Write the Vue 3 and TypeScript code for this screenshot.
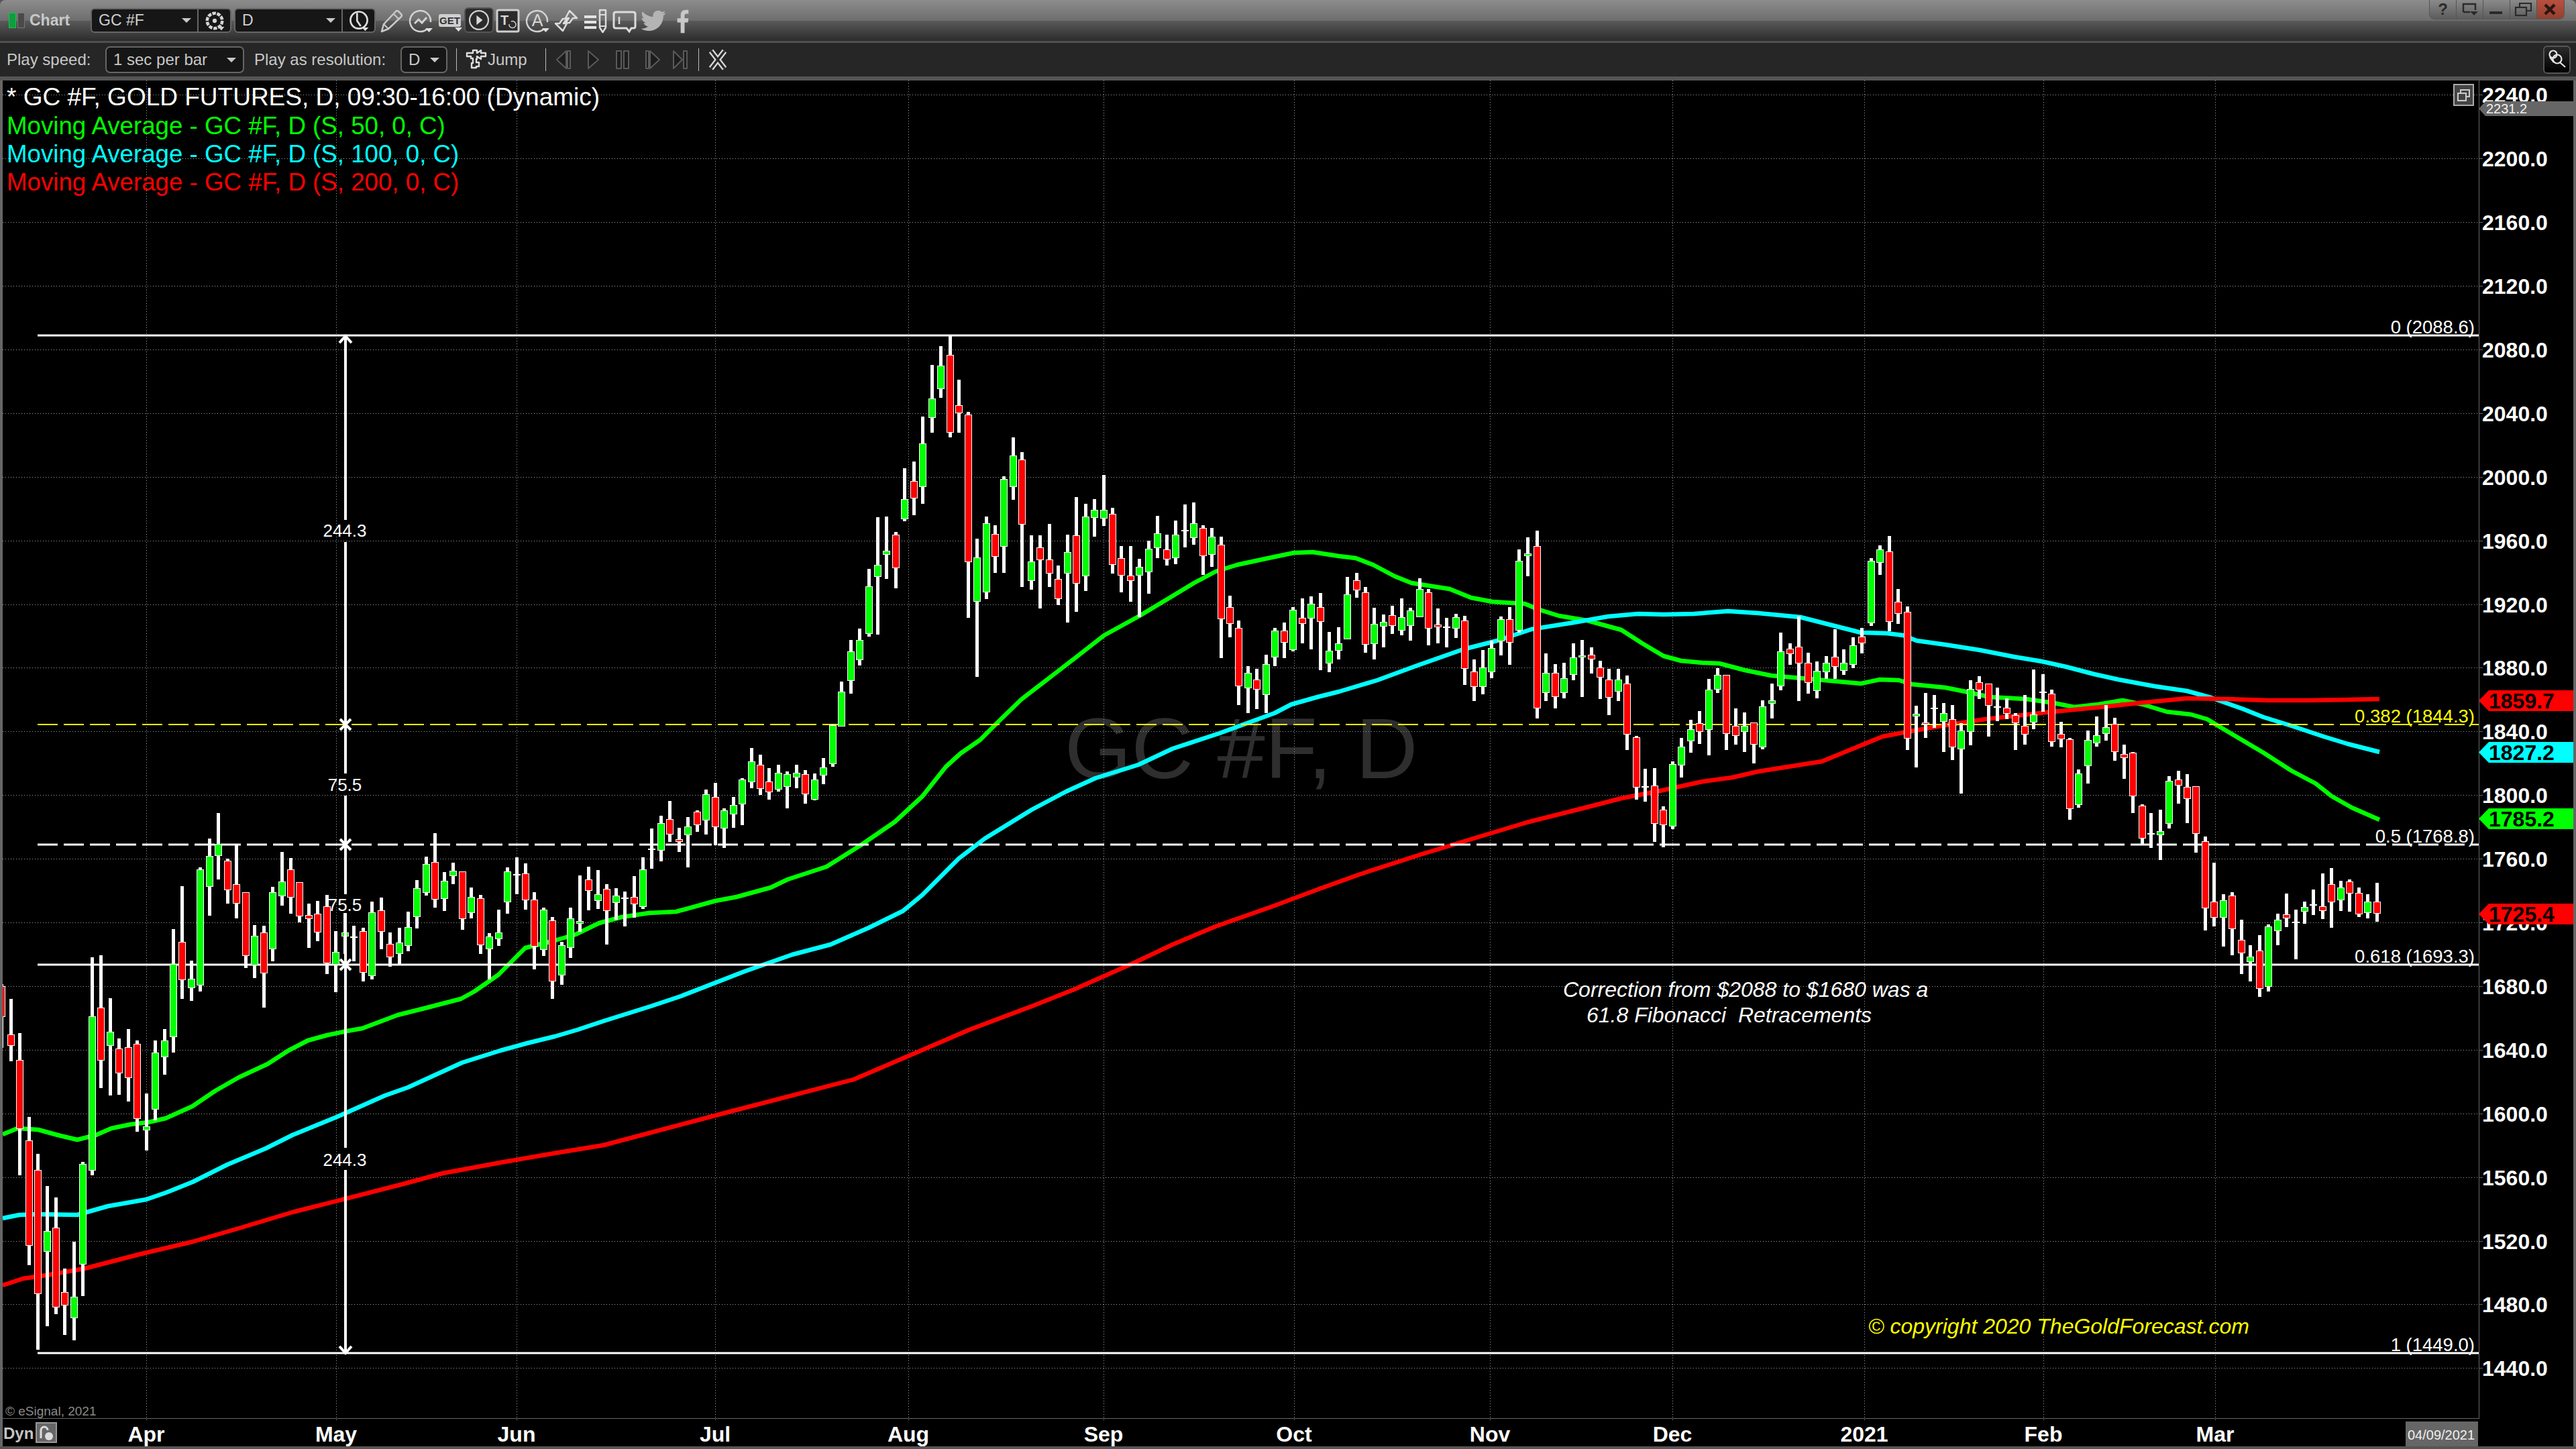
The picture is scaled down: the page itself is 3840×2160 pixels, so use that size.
<script setup lang="ts">
import { computed } from 'vue'

// [high, low, bodyTop, bodyBottom, up] in page pixels, one row per daily bar
const bars: number[][] = [
  [1467,1562,1471,1515,0],[1489,1582,1543,1558,0],[1540,1752,1581,1682,0],[1665,1886,1701,1856,0],[1720,2012,1745,1928,0],
  [1768,1977,1836,1865,1],[1785,1959,1831,1948,0],[1891,1990,1927,1945,0],[1851,1998,1934,1964,1],[1732,1932,1736,1884,1],
  [1427,1752,1516,1744,1],[1424,1622,1503,1580,0],[1488,1633,1539,1558,1],[1548,1632,1564,1599,0],[1534,1642,1562,1606,0],
  [1551,1687,1557,1667,0],[1630,1715,1680,1684,1],[1551,1670,1570,1653,1],[1534,1602,1552,1575,1],[1385,1569,1438,1545,1],
  [1321,1489,1405,1460,0],[1432,1492,1460,1472,1],[1293,1478,1297,1468,1],[1250,1365,1277,1321,1],[1212,1311,1259,1275,1],
  [1280,1347,1284,1326,0],[1259,1369,1319,1346,0],[1331,1443,1331,1424,0],[1379,1458,1396,1438,1],[1380,1502,1391,1450,0],
  [1322,1433,1331,1414,1],[1270,1350,1315,1335,1],[1279,1362,1297,1337,0],[1315,1375,1316,1365,0],[1347,1413,1365,1369,0],
  [1343,1403,1363,1389,0],[1334,1452,1352,1435,0],[1388,1479,1420,1437,1],[1361,1422,1391,1395,1],[1380,1433,1397,1397,1],
  [1383,1463,1389,1449,0],[1344,1460,1361,1454,1],[1338,1415,1358,1388,0],[1390,1441,1408,1426,0],[1383,1438,1406,1421,1],
  [1359,1418,1383,1409,1],[1312,1384,1325,1366,1],[1277,1335,1289,1330,1],[1242,1353,1286,1340,0],[1300,1358,1314,1339,1],
  [1286,1318,1299,1305,1],[1300,1386,1300,1369,0],[1323,1369,1338,1360,1],[1334,1422,1340,1408,0],[1391,1460,1397,1414,1],
  [1356,1410,1391,1399,1],[1293,1362,1300,1344,1],[1278,1333,1304,1304,1],[1287,1356,1303,1341,0],[1330,1445,1342,1410,0],
  [1353,1425,1357,1415,1],[1367,1489,1373,1462,0],[1404,1468,1410,1453,1],[1353,1428,1370,1412,1],[1305,1389,1374,1376,1],
  [1292,1357,1312,1327,0],[1297,1355,1334,1342,1],[1318,1408,1326,1357,0],[1324,1371,1336,1345,1],[1329,1381,1339,1339,1],
  [1306,1368,1338,1347,0],[1278,1355,1297,1351,1],[1235,1295,1266,1266,1],[1216,1284,1228,1267,1],[1194,1255,1222,1243,0],
  [1234,1270,1252,1254,0],[1218,1293,1233,1244,1],[1208,1240,1211,1229,0],[1177,1244,1185,1222,1],[1167,1260,1189,1232,0],
  [1205,1264,1209,1234,1],[1188,1234,1201,1213,1],[1160,1230,1163,1198,1],[1115,1175,1136,1165,1],[1125,1185,1141,1175,0],
  [1145,1192,1166,1180,0],[1140,1180,1153,1176,1],[1150,1205,1155,1172,1],[1140,1175,1153,1158,1],[1148,1198,1155,1183,0],
  [1153,1193,1163,1191,1],[1130,1169,1145,1155,1],[1080,1143,1082,1138,1],[1016,1083,1032,1082,1],[954,1034,972,1014,1],
  [937,992,955,983,1],[848,949,875,944,1],[771,946,843,859,1],[770,863,822,826,1],[793,877,798,846,0],
  [698,777,745,773,1],[688,768,718,742,0],[621,751,662,725,1],[544,645,595,622,1],[516,593,546,579,1],
  [500,652,530,644,0],[566,645,605,615,0],[614,921,619,837,0],[803,1009,832,896,1],[770,893,781,882,1],
  [783,854,797,829,0],[710,854,715,814,1],[652,745,680,725,1],[674,875,686,781,0],[798,879,838,865,1],
  [798,907,817,834,0],[781,875,835,854,0],[843,902,864,892,0],[797,928,824,854,1],[741,912,799,869,0],
  [751,881,771,858,1],[744,800,761,771,1],[708,784,761,772,1],[757,855,767,841,0],[814,883,833,857,0],
  [814,897,859,865,0],[833,920,846,857,1],[806,885,819,852,1],[769,832,796,816,1],[797,843,820,833,0],
  [776,841,798,831,1],[752,816,791,791,1],[749,812,781,801,1],[783,857,788,828,0],[787,845,801,826,1],
  [800,981,813,922,0],[888,950,906,929,0],[925,1051,937,1022,0],[993,1063,1004,1025,1],[997,1057,1014,1027,0],
  [976,1063,991,1035,1],[936,993,941,979,1],[928,981,941,957,0],[905,971,910,968,1],[892,959,922,929,0],
  [889,968,901,921,1],[884,999,906,926,0],[942,1002,971,988,1],[935,983,960,969,1],[860,952,887,952,1],
  [854,891,866,879,0],[875,973,884,960,0],[906,983,931,959,1],[916,965,928,933,1],[903,945,918,932,0],
  [892,947,921,939,1],[906,955,911,932,1],[862,918,879,919,1],[878,962,884,936,0],[907,959,932,934,0],
  [921,965,935,935,1],[915,951,921,936,1],[918,1021,926,996,0],[983,1045,1002,1023,0],[969,1035,996,1023,1],
  [955,1011,967,1001,1],[919,977,924,955,1],[905,991,924,957,0],[819,943,837,939,1],[801,859,826,828,1],
  [791,1071,815,1055,0],[974,1045,1004,1032,1],[990,1056,1004,1038,0],[988,1041,1012,1032,1],[959,1014,981,1005,1],
  [954,1039,978,979,1],[965,1004,977,982,0],[985,1042,996,1009,0],[997,1066,1014,1039,0],[997,1045,1014,1030,1],
  [1007,1118,1020,1094,0],[1097,1192,1100,1173,0],[1146,1195,1173,1173,1],[1145,1255,1172,1227,0],[1202,1263,1208,1229,0],
  [1135,1236,1140,1231,1],[1100,1159,1114,1140,1],[1073,1122,1088,1104,1],[1060,1109,1079,1090,0],[1012,1126,1029,1087,1],
  [996,1033,1007,1027,1],[1006,1118,1007,1093,0],[1056,1110,1083,1096,0],[1062,1121,1083,1090,1],[1078,1138,1078,1109,0],
  [1044,1117,1054,1113,1],[1019,1071,1045,1048,1],[943,1029,972,1022,1],[959,991,968,974,0],[919,1045,965,988,0],
  [973,1034,989,1017,0],[986,1041,1001,1029,1],[978,1012,989,1001,1],[938,1012,980,993,0],[968,1006,989,999,1],
  [950,996,963,990,1],[936,974,950,958,0],[832,933,837,928,1],[813,857,820,838,1],[799,941,823,926,0],
  [878,930,898,914,0],[904,1118,913,1100,0],[1052,1144,1065,1067,1],[1033,1100,1078,1079,0],[1036,1085,1056,1056,1],
  [1048,1121,1064,1075,1],[1051,1133,1073,1113,0],[1078,1183,1090,1116,1],[1014,1111,1028,1090,1],[1008,1042,1018,1028,0],
  [1019,1098,1020,1051,0],[1025,1075,1054,1054,1],[1041,1072,1056,1063,0],[1063,1118,1067,1077,0],[1036,1110,1083,1094,0],
  [998,1087,1066,1076,1],[1005,1061,1032,1032,1],[1028,1113,1035,1105,0],[1076,1114,1095,1101,0],[1100,1222,1103,1205,0],
  [1147,1204,1154,1199,1],[1089,1168,1104,1141,1],[1068,1113,1097,1107,1],[1051,1104,1085,1093,1],[1070,1134,1080,1120,0],
  [1110,1161,1125,1129,0],[1121,1212,1123,1186,0],[1199,1259,1202,1249,0],[1212,1264,1243,1243,1],[1207,1282,1240,1244,1],
  [1157,1235,1165,1227,1],[1149,1198,1163,1170,0],[1154,1227,1174,1190,0],[1173,1271,1173,1242,0],[1247,1387,1255,1353,0],
  [1286,1381,1345,1367,0],[1333,1411,1343,1367,1],[1330,1424,1336,1384,0],[1371,1452,1402,1420,0],[1409,1463,1427,1433,1],
  [1394,1486,1418,1473,0],[1378,1478,1382,1470,1],[1362,1409,1372,1387,1],[1332,1382,1364,1368,0],[1356,1430,1375,1375,1],
  [1344,1377,1353,1358,1],[1326,1364,1349,1349,1],[1302,1370,1352,1357,0],[1294,1383,1319,1344,0],[1313,1358,1324,1341,1],
  [1311,1359,1315,1331,0],[1323,1367,1332,1362,0],[1333,1369,1345,1360,1],[1316,1374,1345,1361,0],
]

const candles = computed(() => bars.map((b, i) => {
  const x = Math.round(2.7 + 13.462 * i - 2.5)
  return { key: i, x, high: b[0], wick: b[1] - b[0], top: b[2], body: b[3] - b[2], up: b[4] === 1, doji: b[2] === b[3] }
}))

const ma50 = '4,1691 26,1682 57,1684 86,1692 115,1699 143,1692 166,1682 195,1676 221,1673 247,1667 287,1649 321,1626 356,1606 399,1586 430,1566 459,1551 488,1543 517,1537 540,1533 593,1513 633,1503 687,1489 707,1478 743,1453 783,1413 827,1402 858,1393 893,1376 927,1367 967,1361 1008,1359 1066,1343 1098,1337 1149,1323 1174,1311 1232,1292 1283,1260 1334,1225 1375,1187 1410,1143 1432,1123 1461,1103 1487,1077 1522,1043 1570,1006 1605,979 1646,947 1697,919 1742,892 1780,869 1812,852 1844,842 1900,830 1929,824 1957,823 1996,829 2021,832 2047,842 2079,859 2104,869 2161,878 2193,891 2225,897 2273,900 2295,909 2324,918 2366,925 2417,939 2448,959 2480,978 2506,985 2538,988 2563,989 2601,999 2640,1007 2697,1012 2774,1019 2802,1013 2831,1014 2850,1020 2900,1025 2930,1031 2966,1039 3020,1042 3062,1048 3092,1054 3128,1050 3164,1044 3194,1050 3230,1061 3266,1065 3290,1072 3320,1090 3374,1122 3416,1149 3452,1168 3476,1187 3506,1204 3547,1222'
const ma100 = '4,1816 29,1811 57,1810 115,1811 161,1798 218,1788 247,1778 287,1762 339,1736 396,1712 436,1692 502,1665 574,1633 608,1621 689,1584 746,1566 786,1555 827,1545 861,1535 900,1522 970,1500 1015,1485 1110,1448 1181,1423 1238,1408 1295,1383 1346,1358 1375,1334 1429,1280 1468,1250 1538,1207 1589,1180 1633,1160 1697,1140 1748,1116 1818,1093 1900,1063 1925,1050 1964,1039 1996,1031 2053,1014 2110,993 2181,968 2232,955 2283,938 2346,928 2397,919 2442,915 2480,916 2525,915 2576,911 2621,914 2684,920 2723,930 2774,943 2812,944 2837,947 2857,955 2900,961 2951,969 3002,979 3044,986 3080,994 3122,1005 3158,1013 3212,1023 3260,1030 3296,1040 3344,1057 3374,1069 3416,1082 3464,1098 3500,1109 3547,1121'
const ma200 = '4,1916 34,1906 69,1901 126,1891 207,1870 287,1851 356,1831 436,1807 511,1788 597,1766 660,1749 746,1733 815,1721 900,1707 1077,1660 1273,1609 1445,1535 1538,1500 1601,1475 1691,1435 1748,1408 1812,1381 1900,1350 1964,1326 2028,1303 2117,1274 2206,1247 2276,1226 2359,1205 2417,1190 2474,1179 2538,1165 2582,1159 2621,1150 2716,1135 2755,1119 2806,1098 2837,1092 2900,1081 2960,1072 3050,1062 3122,1055 3188,1048 3260,1041 3320,1042 3380,1044 3440,1044 3500,1043 3547,1042'

const priceY = (p: number) => Math.round(141.3 + (2240 - p) * 2.3725)
const priceTicks = Array.from({ length: 21 }, (_, i) => {
  const p = 2240 - i * 40
  return { label: p.toFixed(1), y: priceY(p) }
})

const months = [
  { label: 'Apr', x: 218 }, { label: 'May', x: 501 }, { label: 'Jun', x: 770 }, { label: 'Jul', x: 1066 },
  { label: 'Aug', x: 1354 }, { label: 'Sep', x: 1645 }, { label: 'Oct', x: 1929 }, { label: 'Nov', x: 2221 },
  { label: 'Dec', x: 2493 }, { label: '2021', x: 2779 }, { label: 'Feb', x: 3046 }, { label: 'Mar', x: 3302 },
]

const fibs = [
  { y: 500, label: '0 (2088.6)', color: '#ffffff', dash: '', width: 3 },
  { y: 1080, label: '0.382 (1844.3)', color: '#ffff00', dash: '30 9', width: 2 },
  { y: 1259, label: '0.5 (1768.8)', color: '#ffffff', dash: '30 9', width: 3 },
  { y: 1438, label: '0.618 (1693.3)', color: '#ffffff', dash: '', width: 3 },
  { y: 2017, label: '1 (1449.0)', color: '#ffffff', dash: '', width: 3 },
]

const legend = [
  { text: '* GC #F, GOLD FUTURES, D, 09:30-16:00 (Dynamic)', y: 157, color: '#ffffff', kind: 'legend' },
  { text: 'Moving Average - GC #F, D (S, 50, 0, C)', y: 200, color: '#00ff00', kind: 'legend legend--ma' },
  { text: 'Moving Average - GC #F, D (S, 100, 0, C)', y: 242, color: '#00ffff', kind: 'legend legend--ma' },
  { text: 'Moving Average - GC #F, D (S, 200, 0, C)', y: 284, color: '#ff0000', kind: 'legend legend--ma' },
]

const tags = [
  { label: '1859.7', top: 1029, fill: '#ff0000', ink: '#ffffff' },
  { label: '1827.2', top: 1106, fill: '#00ffff', ink: '#000000' },
  { label: '1785.2', top: 1205, fill: '#00ff00', ink: '#000000' },
  { label: '1725.4', top: 1347, fill: '#ff0000', ink: '#ffffff' },
]

const measureSegments = [[500, 775], [808, 1153], [1186, 1333], [1361, 1711], [1744, 2017]]
const measureMarks = [1080, 1259, 1438]
const measureLabels = [
  { text: '244.3', y: 800 }, { text: '75.5', y: 1179 }, { text: '75.5', y: 1358 }, { text: '244.3', y: 1738 },
]

const notes = [
  { text: 'Correction from $2088 to $1680 was a', x: 2330, y: 1486, color: '#ffffff' },
  { text: '61.8 Fibonacci  Retracements', x: 2365, y: 1524, color: '#ffffff' },
  { text: '© copyright 2020 TheGoldForecast.com', x: 2785, y: 1988, color: '#ffff00' },
]
</script>

<template>
  <div class="window">
    <header class="titlebar">
      <div class="brand">
        <span class="brand-on"></span>
        <span class="brand-off"></span>
        <span class="brand-name">Chart</span>
      </div>

      <div class="combo combo--symbol">
        <span class="combo-text">GC #F</span>
        <i class="caret"></i>
        <span class="combo-btn">
          <svg viewBox="0 0 40 40" width="40" height="40">
            <circle cx="20" cy="20" r="12.5" fill="none" stroke="#d4d4d4" stroke-width="5" stroke-dasharray="6 1.8" />
            <circle cx="20" cy="20" r="3.5" fill="#d4d4d4" />
            <path d="M26 30h10l-5 6z" fill="#d4d4d4" />
          </svg>
        </span>
      </div>
      <div class="combo combo--interval">
        <span class="combo-text">D</span>
        <i class="caret"></i>
        <span class="combo-btn">
          <svg viewBox="0 0 40 40" width="40" height="40">
            <circle cx="20" cy="19" r="14" fill="none" stroke="#dcdcdc" stroke-width="3" />
            <path d="M17 7v13l6 9" fill="none" stroke="#dcdcdc" stroke-width="3" />
            <path d="M25 31h11l-5.500 6z" fill="#dcdcdc" />
          </svg>
        </span>
      </div>

      <div class="tools">
        <span class="tool">
          <svg viewBox="0 0 40 40" width="40" height="40">
            <path d="M5 36l3-11L26 6q2-2 4 0l4 4q2 2 0 4L15 32z" fill="none" stroke="#c9c9c9" stroke-width="2.500" stroke-linejoin="round" />
            <path d="M23 10l7 7M8 25l7 7" fill="none" stroke="#c9c9c9" stroke-width="2" />
          </svg>
        </span>
        <span class="tool">
          <svg viewBox="0 0 40 40" width="40" height="40">
            <path d="M30 32A15.500 15.500 0 1 1 35 22" fill="none" stroke="#d2d2d2" stroke-width="2.500" />
            <path d="M11 24l6-6 5 5 7-8" fill="none" stroke="#d2d2d2" stroke-width="3" />
            <path d="M27 31h11l-5.500 6z" fill="#e0e0e0" />
          </svg>
        </span>
        <span class="tool">
          <svg viewBox="0 0 40 40" width="40" height="40">
            <rect x="4" y="10" width="33" height="19" rx="3" fill="#cfcfcf" />
            <text x="20.500" y="25" class="get-text">GET</text>
            <path d="M28 30h11l-5.500 6z" fill="#e0e0e0" />
          </svg>
        </span>
        <span class="tool tool--active">
          <svg viewBox="0 0 40 40" width="40" height="40">
            <circle cx="20" cy="20" r="15.500" fill="none" stroke="#cfcfcf" stroke-width="2.500" />
            <path d="M16 12l10 8-10 8z" fill="#d8d8d8" />
          </svg>
        </span>
        <span class="tool">
          <svg viewBox="0 0 40 40" width="40" height="40">
            <rect x="4" y="4" width="32" height="32" rx="2" fill="#2b2b2b" stroke="#cfcfcf" stroke-width="3" />
            <text x="15" y="26" class="t-text">T</text>
            <path d="M22 25a5 5 0 1 0 3-4" fill="none" stroke="#cfcfcf" stroke-width="1.500" />
          </svg>
        </span>
        <span class="tool">
          <svg viewBox="0 0 40 40" width="40" height="40">
            <path d="M30 32A15.500 15.500 0 1 1 35 22" fill="none" stroke="#d2d2d2" stroke-width="2.500" />
            <text x="20" y="28" class="a-text">A</text>
            <path d="M27 31h11l-5.500 6z" fill="#e0e0e0" />
          </svg>
        </span>
        <span class="tool">
          <svg viewBox="0 0 40 40" width="40" height="40">
            <path d="M25 5l11 11h-6l-5 7h-6l5-7h-5z" fill="none" stroke="#dcdcdc" stroke-width="2.500" stroke-linejoin="round" />
            <path d="M15 35L4 24h6l5-7h6l-5 7h5z" fill="none" stroke="#dcdcdc" stroke-width="2.500" stroke-linejoin="round" />
          </svg>
        </span>
        <span class="tool">
          <svg viewBox="0 0 40 40" width="40" height="40">
            <path d="M4 12h18v4H4zM4 20h18v4H4zM4 28h18v4H4z" fill="#e4e4e4" />
            <path d="M27 4h9v26l-4.500 7-4.500-7z" fill="none" stroke="#dcdcdc" stroke-width="2.500" stroke-linejoin="round" />
            <path d="M27 11h9M27 28h9" stroke="#dcdcdc" stroke-width="2" />
          </svg>
        </span>
        <span class="tool">
          <svg viewBox="0 0 40 40" width="40" height="40">
            <path d="M7 7h26q3 0 3 3v18q0 3-3 3h-3l-3 5-4-5H7q-3 0-3-3V10q0-3 3-3z" fill="none" stroke="#dcdcdc" stroke-width="3" />
            <path d="M12 14v11" stroke="#dcdcdc" stroke-width="2.500" />
          </svg>
        </span>
        <span class="tool">
          <svg viewBox="0 0 24 24" width="40" height="40">
            <path d="M23 4.900c-.8.4-1.700.6-2.600.7 1-.6 1.700-1.400 2-2.500-.9.5-1.900.9-2.900 1.100C18.700 3.300 17.500 2.800 16.200 2.800c-2.500 0-4.600 2-4.600 4.600 0 .4 0 .7.100 1C7.900 8.200 4.500 6.400 2.300 3.600c-.4.700-.6 1.400-.6 2.300 0 1.600.8 3 2 3.800-.8 0-1.500-.2-2.100-.6v.1c0 2.200 1.600 4.100 3.700 4.500-.4.100-.8.200-1.200.2-.3 0-.6 0-.9-.1.600 1.800 2.300 3.200 4.300 3.200-1.600 1.200-3.600 2-5.700 2-.4 0-.7 0-1.100-.1 2 1.300 4.500 2.100 7.100 2.100 8.500 0 13.100-7 13.100-13.100v-.6c.9-.6 1.700-1.500 2.300-2.400z" fill="#b4b4b4" />
          </svg>
        </span>
        <span class="tool">
          <svg viewBox="0 0 24 24" width="40" height="40">
            <path d="M13.500 23v-9.500h3l.5-3.700h-3.500V7.400c0-1 .3-1.700 1.700-1.700H17V2.300c-.3 0-1.400-.1-2.600-.1-2.600 0-4.400 1.600-4.400 4.500v3.100H7v3.700h3V23z" fill="#c8c8c8" />
          </svg>
        </span>
      </div>

      <div class="winbtns">
        <span class="winbtn"><span class="help">?</span></span>
        <span class="winbtn">
          <svg viewBox="0 0 30 24" width="30" height="24">
            <path d="M5 16V4h18v9M5 16h10" fill="none" stroke="#2a2a2a" stroke-width="2.500" />
            <path d="M15 15h12l-6 6z" fill="#2a2a2a" />
          </svg>
        </span>
        <span class="winbtn">
          <svg viewBox="0 0 30 24" width="30" height="24"><rect x="4" y="15" width="19" height="4" fill="#2a2a2a" /></svg>
        </span>
        <span class="winbtn">
          <svg viewBox="0 0 30 24" width="30" height="24">
            <rect x="3" y="9" width="16" height="12" fill="none" stroke="#2a2a2a" stroke-width="2.200" />
            <path d="M9 8V3h17v11h-6" fill="none" stroke="#2a2a2a" stroke-width="2.200" />
          </svg>
        </span>
        <span class="winbtn winbtn--close">
          <svg viewBox="0 0 30 24" width="30" height="24">
            <path d="M7 5l14 14M21 5L7 19" stroke="#2c1511" stroke-width="4.500" />
          </svg>
        </span>
      </div>
    </header>

    <div class="playbar">
      <span class="play-label play-label--speed">Play speed:</span>
      <div class="select select--speed">
        <span>1 sec per bar</span>
        <i class="caret"></i>
      </div>
      <span class="play-label play-label--res">Play as resolution:</span>
      <div class="select select--res">
        <span>D</span>
        <i class="caret"></i>
      </div>
      <i class="vsep vsep--a"></i>
      <div class="jump">
        <svg viewBox="0 0 32 32" width="32" height="32">
          <path d="M2 6h9V2h6v4l6-4v4h7v5h-7v4l-6-4v4h-1v5h4v6h-4v2H9v-7h2v-7H8V11H2z" fill="#262626" stroke="#dedede" stroke-width="2.400" stroke-linejoin="round" />
        </svg>
        <span>Jump</span>
      </div>
      <i class="vsep vsep--b"></i>
      <svg class="pb pb--prev" viewBox="0 0 24 30" width="24" height="30">
        <path d="M16 2L2 15l14 13zM18 2h4v26h-4z" fill="#1d1d1d" stroke="#5a5a5a" stroke-width="2" stroke-linejoin="round" />
      </svg>
      <svg class="pb pb--play" viewBox="0 0 20 30" width="20" height="30">
        <path d="M2 2l15 13L2 28z" fill="#1d1d1d" stroke="#5a5a5a" stroke-width="2" stroke-linejoin="round" />
      </svg>
      <svg class="pb pb--pause" viewBox="0 0 22 30" width="22" height="30">
        <path d="M2 2h7v26H2zM13 2h7v26h-7z" fill="#1d1d1d" stroke="#5a5a5a" stroke-width="2" stroke-linejoin="round" />
      </svg>
      <svg class="pb pb--next" viewBox="0 0 24 30" width="24" height="30">
        <path d="M2 2h4v26H2zM8 2l14 13L8 28z" fill="#1d1d1d" stroke="#5a5a5a" stroke-width="2" stroke-linejoin="round" />
      </svg>
      <svg class="pb pb--end" viewBox="0 0 24 30" width="24" height="30">
        <path d="M2 2l13 13L2 28zM17 2h5v26h-5z" fill="#1d1d1d" stroke="#5a5a5a" stroke-width="2" stroke-linejoin="round" />
      </svg>
      <i class="vsep vsep--c"></i>
      <svg class="xbtn" viewBox="0 0 32 32" width="32" height="32">
        <path d="M6 3l20 26M26 3L6 29" stroke="#d8d8d8" stroke-width="8" />
        <path d="M6 3l20 26M26 3L6 29" stroke="#2a2a2a" stroke-width="3.500" />
      </svg>
      <div class="pin-btn">
        <svg viewBox="0 0 32 32" width="32" height="32">
          <circle cx="10" cy="8" r="5.500" fill="none" stroke="#e6e6e6" stroke-width="2.200" />
          <circle cx="16" cy="15" r="6.500" fill="none" stroke="#e6e6e6" stroke-width="2.200" />
          <path d="M20 20l8 7M5 12l6 8" stroke="#e6e6e6" stroke-width="2.200" fill="none" />
        </svg>
      </div>
    </div>

    <svg class="chart" viewBox="0 120 3840 2040" width="3840" height="2040">
      <rect x="0" y="120" width="3840" height="2040" fill="#000" />

      <text x="1587" y="1160" class="watermark">GC #F, D</text>

      <g class="grid">
        <line v-for="t in priceTicks" :key="t.y" x1="4" :y1="t.y + 0.5" x2="3695" :y2="t.y + 0.5" />
        <line v-for="m in months" :key="m.label" :x1="m.x + 0.5" y1="120" :x2="m.x + 0.5" y2="2120" />
      </g>

      <line x1="3695.5" y1="120" x2="3695.5" y2="2115" class="axis" />
      <line x1="4" y1="2114.5" x2="3695" y2="2114.5" class="axis" />
      <line v-for="t in priceTicks" :key="'tick' + t.y" x1="3695" :y1="t.y + 0.5" x2="3701" :y2="t.y + 0.5" class="axis" />

      <polyline :points="ma50" class="ma" stroke="#00ff00" />
      <polyline :points="ma100" class="ma" stroke="#00ffff" />
      <polyline :points="ma200" class="ma" stroke="#ff0000" />

      <g v-for="f in fibs" :key="f.y">
        <line x1="56" :y1="f.y" x2="3695" :y2="f.y" :stroke="f.color" :stroke-width="f.width" :stroke-dasharray="f.dash" />
        <text x="3689" :y="f.y - 3" :fill="f.color" class="fib-label">{{ f.label }}</text>
      </g>

      <g v-for="c in candles" :key="c.key" class="candle">
        <rect :x="c.x" :y="c.high" width="5" :height="c.wick" fill="#fff" />
        <rect v-if="c.doji" :x="c.x - 3" :y="c.top - 1" width="11" height="2" fill="#fff" />
        <template v-else>
          <rect :x="c.x - 3" :y="c.top - 1" width="11" :height="c.body + 2" fill="#fff" />
          <rect :x="c.x - 2" :y="c.top" width="9" :height="c.body" :fill="c.up ? '#00ff00' : '#ff0000'" />
        </template>
      </g>

      <g class="measure">
        <line v-for="s in measureSegments" :key="s[0]" x1="515" :y1="s[0]" x2="515" :y2="s[1]" />
        <path d="M506 511l9-10 9 10M506 2007l9 10 9-10" fill="none" />
        <path v-for="y in measureMarks" :key="y" :d="`M507 ${y - 8}l16 16M523 ${y - 8}l-16 16`" />
        <text v-for="l in measureLabels" :key="l.y" x="514" :y="l.y" class="measure-label">{{ l.text }}</text>
      </g>

      <text v-for="l in legend" :key="l.y" x="10" :y="l.y" :fill="l.color" :class="l.kind">{{ l.text }}</text>
      <text v-for="n in notes" :key="n.text" :x="n.x" :y="n.y" :fill="n.color" class="note">{{ n.text }}</text>

      <text x="8" y="2110" class="vendor">© eSignal, 2021</text>

      <g transform="translate(3657 125)">
        <rect x="1" y="1" width="29" height="31" fill="#444" stroke="#aaa" stroke-width="2" />
        <rect x="7" y="14" width="12" height="11" fill="none" stroke="#ccc" stroke-width="2" />
        <path d="M11 13V9h13v10h-4" fill="none" stroke="#ccc" stroke-width="2" />
      </g>

      <text v-for="t in priceTicks" :key="'p' + t.y" x="3700" :y="t.y + 12" class="price">{{ t.label }}</text>

      <g>
        <path d="M3705 151h131v22h-131l-10-11z" fill="#666" />
        <text x="3706" y="169" class="mini">2231.2</text>
      </g>
      <g v-for="t in tags" :key="t.label">
        <path :d="`M3710 ${t.top}h126v31h-126l-15-15.500z`" :fill="t.fill" />
        <text x="3710" :y="t.top + 27" :fill="t.ink" class="price price--tag">{{ t.label }}</text>
      </g>

      <text v-for="m in months" :key="'m' + m.label" :x="m.x" y="2149" class="month">{{ m.label }}</text>

      <text x="5" y="2145" class="dyn">Dyn</text>
      <g transform="translate(53 2120)">
        <rect x="1" y="1" width="30" height="29" fill="#666" stroke="#999" stroke-width="2" />
        <path d="M8 24V12a5 5 0 0 1 10 0" fill="none" stroke="#ddd" stroke-width="3" />
        <circle cx="20" cy="21" r="6" fill="#ddd" />
      </g>

      <rect x="3586" y="2119" width="108" height="37" fill="#666" />
      <text x="3589" y="2146" class="mini">04/09/2021</text>

      <rect x="0" y="120" width="4" height="2040" fill="#666" />
      <rect x="3836" y="120" width="4" height="2040" fill="#666" />
      <rect x="0" y="2156" width="3840" height="4" fill="#555" />
    </svg>
  </div>
</template>

<style scoped>
.window {
  width: 3840px;
  height: 2160px;
  display: flex;
  flex-direction: column;
  overflow: hidden;
  background: #555;
  font-family: "Liberation Sans", Arial, sans-serif;
}

.titlebar {
  height: 61px;
  flex: none;
  display: flex;
  align-items: center;
  padding-left: 13px;
  border-radius: 8px 8px 0 0;
  border-bottom: 3px solid #505050;
  background: linear-gradient(#8c8c8c 0, #6e6e6e 50%, #5a5a5a 50%, #2c2c2c 100%);
}

.brand {
  width: 122px;
  display: flex;
  align-items: center;
  flex: none;
}

.brand-on,
.brand-off {
  width: 9px;
  height: 21px;
  border: 1px solid #5a5a5a;
}

.brand-on {
  background: #0f9d3f;
  border-color: #19c04f;
}

.brand-off {
  margin-left: 2px;
  background: #4a4a4a;
  border-color: #777;
}

.brand-name {
  margin-left: 7px;
  font-size: 23px;
  font-weight: 700;
  color: #c8c8c8;
}

.combo {
  height: 37px;
  flex: none;
  display: flex;
  align-items: center;
  box-sizing: border-box;
  border: 2px solid #666;
  border-radius: 6px;
  background: #161616;
  color: #cfcfcf;
  font-size: 23px;
}

.combo--symbol {
  width: 210px;
}

.combo--interval {
  width: 211px;
  margin-left: 4px;
}

.combo-text {
  margin-left: 10px;
  flex: 1;
}

.combo-btn {
  width: 47px;
  height: 100%;
  flex: none;
  margin-left: 9px;
  display: flex;
  align-items: center;
  justify-content: center;
  border-left: 2px solid #666;
}

.combo-btn svg {
  width: 36px;
  height: 36px;
}

.caret {
  flex: none;
  width: 0;
  height: 0;
  border-left: 7px solid transparent;
  border-right: 7px solid transparent;
  border-top: 7px solid #c8c8c8;
}

.tools {
  display: flex;
  flex: none;
  margin-left: 2px;
}

.tool {
  width: 43.4px;
  height: 40px;
  flex: none;
  display: flex;
  align-items: center;
  justify-content: center;
}

.tool--active {
  height: 38px;
  box-sizing: border-box;
  border: 2px solid #555;
  border-radius: 6px;
  background: #2b2b2b;
}

.tool--active svg {
  width: 36px;
  height: 36px;
}

.get-text {
  font: 700 15px "Liberation Sans", sans-serif;
  fill: #333;
  text-anchor: middle;
}

.t-text {
  font: 700 20px "Liberation Sans", sans-serif;
  fill: #d8d8d8;
  text-anchor: middle;
}

.a-text {
  font: 400 25px "Liberation Sans", sans-serif;
  fill: #d8d8d8;
  text-anchor: middle;
}

.winbtns {
  margin-left: auto;
  margin-right: 17px;
  align-self: flex-start;
  height: 28px;
  display: flex;
  border: 1px solid #555;
  border-top: 0;
  border-radius: 0 0 8px 8px;
  overflow: hidden;
}

.winbtn {
  width: 40px;
  height: 28px;
  flex: none;
  display: flex;
  align-items: center;
  justify-content: center;
  box-sizing: border-box;
  border-right: 1px solid #555;
  background: linear-gradient(#8a8a8a, #5c5c5c);
}

.winbtn--close {
  border-right: 0;
  background: linear-gradient(#b9503f, #93402f);
}

.help {
  font-size: 24px;
  font-weight: 700;
  color: #2a2a2a;
}

.playbar {
  height: 50px;
  flex: none;
  display: flex;
  align-items: center;
  position: relative;
  padding-left: 10px;
  border-left: 0;
  border-bottom: 6px solid #555;
  background: #262626;
  color: #c8c8c8;
  font-size: 24px;
}

.play-label {
  flex: none;
}

.play-label--speed {
  width: 147px;
}

.play-label--res {
  width: 218px;
  margin-left: 15px;
}

.select {
  height: 40px;
  flex: none;
  display: flex;
  align-items: center;
  justify-content: space-between;
  box-sizing: border-box;
  padding: 0 10px;
  border: 2px solid #666;
  border-radius: 7px;
  background: #161616;
}

.select--speed {
  width: 207px;
}

.select--res {
  width: 70px;
}

.vsep {
  width: 1px;
  height: 34px;
  flex: none;
  background: #bbb;
}

.vsep--a {
  margin-left: 13px;
}

.vsep--b {
  margin-left: 26px;
}

.vsep--c {
  margin-left: 15px;
}

.jump {
  display: flex;
  align-items: center;
  flex: none;
  width: 93px;
  margin-left: 13px;
  font-size: 24px;
}

.jump span {
  margin-left: 1px;
}

.pb {
  flex: none;
}

.pb--prev {
  margin-left: 14px;
}

.pb--play {
  margin-left: 23px;
}

.pb--pause {
  margin-left: 22px;
}

.pb--next {
  margin-left: 22px;
}

.pb--end {
  margin-left: 17px;
}

.xbtn {
  flex: none;
  margin-left: 12px;
}

.pin-btn {
  margin-left: auto;
  margin-right: 8px;
  width: 41px;
  height: 42px;
  flex: none;
  display: flex;
  align-items: center;
  justify-content: center;
  box-sizing: border-box;
  border: 2px solid #555;
  border-radius: 6px;
  background: linear-gradient(#2a2a2a, #000);
}

.chart {
  display: block;
  flex: none;
  font-family: "Liberation Sans", Arial, sans-serif;
}

.watermark {
  font-size: 128px;
  fill: #2e2e2e;
}

.grid line {
  stroke: #a0a0a0;
  stroke-width: 1;
  stroke-dasharray: 1 3;
}

.axis {
  stroke: #666;
  stroke-width: 1;
}

.ma {
  fill: none;
  stroke-width: 6.5;
  stroke-linejoin: round;
}

.candle rect {
  shape-rendering: crispEdges;
}

.fib-label {
  font-size: 27.5px;
  text-anchor: end;
}

.measure line,
.measure path {
  stroke: #fff;
  stroke-width: 4;
  fill: none;
}

.measure-label {
  font-size: 26px;
  fill: #fff;
  stroke: none;
  text-anchor: middle;
}

.legend {
  font-size: 37px;
}

.legend--ma {
  font-size: 36.7px;
}

.note {
  font-size: 32px;
  font-style: italic;
  white-space: pre;
}

.vendor {
  font-size: 19px;
  fill: #8a8a8a;
}

.price {
  font-size: 32px;
  font-weight: 700;
  fill: #fff;
}

.price--tag {
  fill: inherit;
}

.mini {
  font-size: 20px;
  fill: #eee;
}

.month {
  font-size: 32px;
  font-weight: 700;
  fill: #fff;
  text-anchor: middle;
}

.dyn {
  font-size: 24px;
  font-weight: 700;
  fill: #c4c4c4;
}
</style>

<style>
html,
body {
  margin: 0;
  background: #000;
}
</style>
